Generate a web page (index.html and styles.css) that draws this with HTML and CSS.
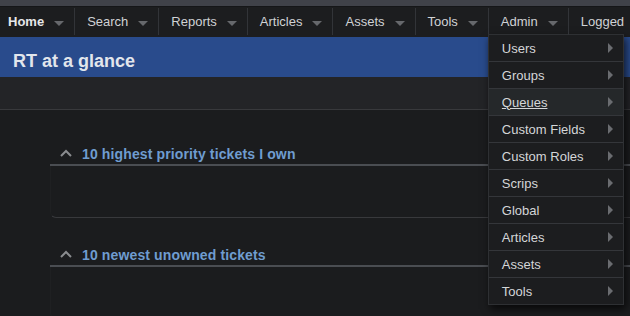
FILE: index.html
```html
<!DOCTYPE html>
<html>
<head>
<meta charset="utf-8">
<link rel="stylesheet" href="styles.css">
</head>
<body>
<div class="topstrip"></div>
<nav class="nav">
  <ul class="nav-list">
    <li class="nav-item first current"><span>Home</span><i class="down"></i></li>
    <li class="nav-item"><span>Search</span><i class="down"></i></li>
    <li class="nav-item"><span>Reports</span><i class="down"></i></li>
    <li class="nav-item"><span>Articles</span><i class="down"></i></li>
    <li class="nav-item"><span>Assets</span><i class="down"></i></li>
    <li class="nav-item"><span>Tools</span><i class="down"></i></li>
    <li class="nav-item admin"><span>Admin</span><i class="down"></i>
      <ul class="menu">
        <li class="menu-item">Users<i class="right"></i></li>
        <li class="menu-item">Groups<i class="right"></i></li>
        <li class="menu-item hover"><span class="u">Queues</span><i class="right"></i></li>
        <li class="menu-item">Custom Fields<i class="right"></i></li>
        <li class="menu-item">Custom Roles<i class="right"></i></li>
        <li class="menu-item">Scrips<i class="right"></i></li>
        <li class="menu-item">Global<i class="right"></i></li>
        <li class="menu-item">Articles<i class="right"></i></li>
        <li class="menu-item">Assets<i class="right"></i></li>
        <li class="menu-item last">Tools<i class="right"></i></li>
      </ul>
    </li>
    <li class="nav-item"><span>Logged</span></li>
  </ul>
</nav>
<header class="title">RT at a glance</header>
<div class="band"></div>
<main class="main">
  <section class="box">
    <div class="box-head">
      <svg class="chev" width="12" height="8" viewBox="0 0 12 8"><path d="M1 7 L6 2 L11 7" fill="none" stroke="#8a8c8f" stroke-width="2"/></svg>
      <span class="box-title">10 highest priority tickets I own</span>
    </div>
    <div class="box-body"></div>
  </section>
  <section class="box">
    <div class="box-head">
      <svg class="chev" width="12" height="8" viewBox="0 0 12 8"><path d="M1 7 L6 2 L11 7" fill="none" stroke="#8a8c8f" stroke-width="2"/></svg>
      <span class="box-title">10 newest unowned tickets</span>
    </div>
    <div class="box-body"></div>
  </section>
</main>
</body>
</html>
```

FILE: styles.css
```css
html, body {
  margin: 0;
  padding: 0;
  background: #1b1c1e;
  font-family: "Liberation Sans", Arial, sans-serif;
  overflow: hidden;
  width: 630px;
  height: 316px;
}
.topstrip {
  height: 6px;
  background: #404249;
  border-bottom: 1px solid #151618;
}
.nav {
  height: 30px;
  background: #1c1d1f;
  position: relative;
  z-index: 5;
}
.nav-list {
  list-style: none;
  margin: 0;
  padding: 0;
  display: flex;
  white-space: nowrap;
  height: 30px;
}
.nav-item {
  position: relative;
  display: flex;
  align-items: center;
  height: 28px;
  padding: 0 10px 2px 13px;
  font-size: 13px;
  color: #d0d2d5;
  flex-shrink: 0;
}
.nav-item::before {
  content: "";
  position: absolute;
  left: 0;
  top: 1px;
  bottom: 2px;
  width: 1px;
  background: #323438;
}
.nav-item.first {
  padding-left: 8px;
}
.nav-item.first::before {
  display: none;
}
.nav-item.current {
  font-weight: bold;
  color: #e6e7e9;
}
.down {
  display: inline-block;
  width: 0;
  height: 0;
  border-left: 5px solid transparent;
  border-right: 5px solid transparent;
  border-top: 5px solid #66686c;
  margin-left: 10px;
  margin-top: 5px;
}
.menu {
  position: absolute;
  top: 27px;
  left: 0;
  width: 134px;
  margin: 0;
  padding: 0;
  list-style: none;
  background: #1c1d1f;
  border: 1px solid #2e3033;
  box-shadow: 2px 4px 8px rgba(0, 0, 0, 0.7);
}
.menu-item {
  display: flex;
  align-items: center;
  justify-content: space-between;
  height: 26px;
  padding: 0 10px 0 13px;
  border-bottom: 1px solid #34363a;
  font-size: 13px;
  color: #d4d6d8;
}
.menu-item.last {
  border-bottom: none;
}
.menu-item.hover {
  background: #25282a;
}
.menu-item .u {
  text-decoration: underline;
}
.right {
  display: inline-block;
  width: 0;
  height: 0;
  border-top: 5px solid transparent;
  border-bottom: 5px solid transparent;
  border-left: 5px solid #6a6c70;
}
.title {
  height: 32px;
  background: #294b8c;
  color: #e2e6ec;
  font-size: 18px;
  font-weight: bold;
  line-height: 32px;
  padding: 8px 0 0 13px;
}
.band {
  height: 32px;
  background: #232427;
  border-bottom: 1px solid #38393c;
}
.main {
  padding: 33px 0 0 50px;
}
.box {
  margin-bottom: 26px;
  margin-right: -10px;
}
.box-head {
  display: flex;
  align-items: center;
  height: 21px;
  border-bottom: 2px solid #4a4d52;
  padding-left: 10px;
}
.chev {
  margin-right: 10px;
  margin-top: -1px;
}
.box-title {
  color: #6f9cd0;
  font-size: 14px;
  font-weight: bold;
  letter-spacing: 0.13px;
}
.box-body {
  height: 51px;
  border: 1px solid #1f2022;
  border-top: none;
  border-bottom-color: #38393c;
  border-radius: 0 0 0 6px;
}
```
